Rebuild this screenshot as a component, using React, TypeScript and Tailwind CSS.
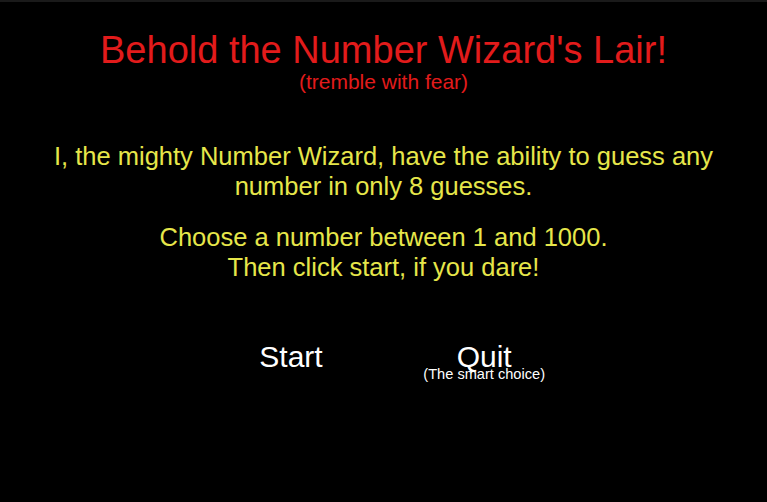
export default function App() {
  return (
    <div className="w-[767px] h-[502px] bg-black text-center font-['Liberation_Sans',Arial,sans-serif] overflow-hidden border-t-2 border-[#1a1a1a]">
      <div className="pt-[25px]">
        <h1 className="text-[38px] leading-[46px] text-[#e21b1b]">Behold the Number Wizard's Lair!</h1>
        <p className="-mt-[2px] text-[21px] leading-[22px] text-[#e21b1b]">(tremble with fear)</p>
      </div>

      <div className="mt-[48px] px-[40px] text-[25.5px] leading-[30px] text-[#e6e64a]">
        <p>I, the mighty Number Wizard, have the ability to guess any number in only 8 guesses.</p>
        <p className="mt-[21px]">
          Choose a number between 1 and 1000.
          <br />
          Then click start, if you dare!
        </p>
      </div>

      <div className="mt-[58px] flex justify-center gap-[134px] pl-[4px] text-white">
        <button className="text-[30px] leading-[34px]">Start</button>
        <button className="relative text-[30px] leading-[34px]">
          Quit
          <span className="absolute left-1/2 top-[26px] -translate-x-1/2 whitespace-nowrap text-[14.6px] leading-[16px]">
            (The smart choice)
          </span>
        </button>
      </div>
    </div>
  )
}
